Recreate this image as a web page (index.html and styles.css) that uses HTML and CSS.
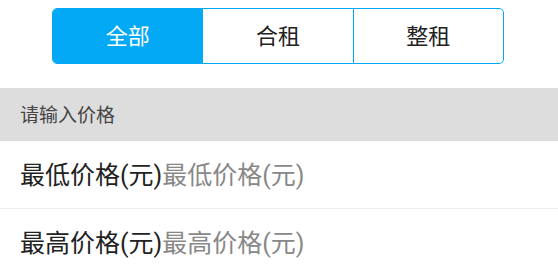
FILE: index.html
```html
<!DOCTYPE html>
<html lang="zh">
<head>
<meta charset="utf-8">
<link rel="stylesheet" href="styles.css">
</head>
<body>
<div class="seg-wrap">
  <div class="seg">
    <div class="seg-item active">全部</div>
    <div class="seg-item">合租</div>
    <div class="seg-item">整租</div>
  </div>
</div>
<div class="section-title">请输入价格</div>
<div class="row"><span class="label">最低价格(元)</span><span class="ph">最低价格(元)</span></div>
<div class="row"><span class="label">最高价格(元)</span><span class="ph">最高价格(元)</span></div>
</body>
</html>
```
FILE: styles.css
```css
* { box-sizing: border-box; }
html, body { margin: 0; padding: 0; background: #fff; }
body {
  font-family: Roboto, "Noto Sans CJK SC", sans-serif;
  width: 558px;
  overflow: hidden;
}
.seg-wrap {
  padding: 8px 54px 0 52px;
  height: 88px;
}
.seg {
  display: flex;
  height: 56px;
  border: 1px solid #03a9f4;
  border-radius: 5px;
  overflow: hidden;
}
.seg-item {
  flex: 1;
  display: flex;
  align-items: center;
  justify-content: center;
  font-size: 22px;
  padding-bottom: 5px;
  color: #222;
  border-left: 1px solid #03a9f4;
}
.seg-item:first-child { border-left: none; }
.seg-item.active { background: #03a9f4; color: #fff; }
.section-title {
  height: 53px;
  background: #dddddd;
  display: flex;
  align-items: center;
  padding-left: 20px;
  padding-bottom: 3px;
  font-size: 19px;
  color: #444;
}
.row {
  height: 68px;
  display: flex;
  align-items: center;
  padding-left: 20px;
  padding-bottom: 3px;
  font-size: 25px;
  border-bottom: 1px solid #eeeeee;
}
.label { color: #222; }
.ph { color: #888; }
```
